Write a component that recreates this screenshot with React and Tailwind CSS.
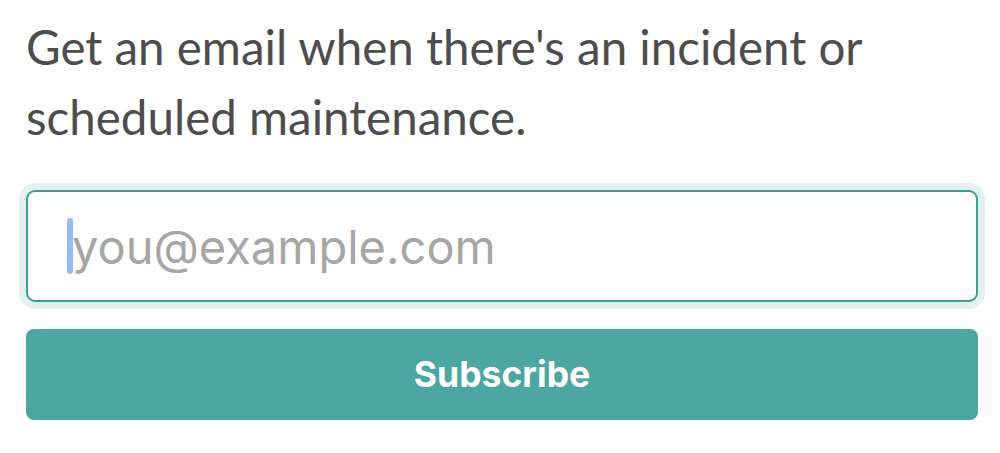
import React from 'react';

export default function App() {
  return (
    <div className="min-h-screen bg-white pl-[26px] pr-[22px] pt-[12px]">
      {/* intro text */}
      <p className="font-['Lato',sans-serif] text-[47.5px] leading-[70px] text-[#4d4d4d]">
        Get an email when there's an incident or scheduled maintenance.
      </p>

      {/* email field */}
      <div className="relative mt-[38px]">
        <input
          type="email"
          placeholder="you@example.com"
          className="block h-[112px] w-full rounded-[9px] border-2 border-[#3d9f98] bg-white pl-[44px] font-['Inter',sans-serif] text-[47px] text-[#333] shadow-[0_0_0_7px_#e3f1f0] outline-none placeholder:text-[#a6a6a6]"
        />
        <span className="pointer-events-none absolute left-[41px] top-[28px] h-[56px] w-[6px] rounded-full bg-[#8ab4f8]/90" />
      </div>

      <button className="mt-[27px] flex h-[91px] w-full items-center justify-center rounded-[8px] bg-[#4ca6a2] font-['Inter',sans-serif] text-[35.5px] font-bold text-white">
        Subscribe
      </button>
    </div>
  );
}
